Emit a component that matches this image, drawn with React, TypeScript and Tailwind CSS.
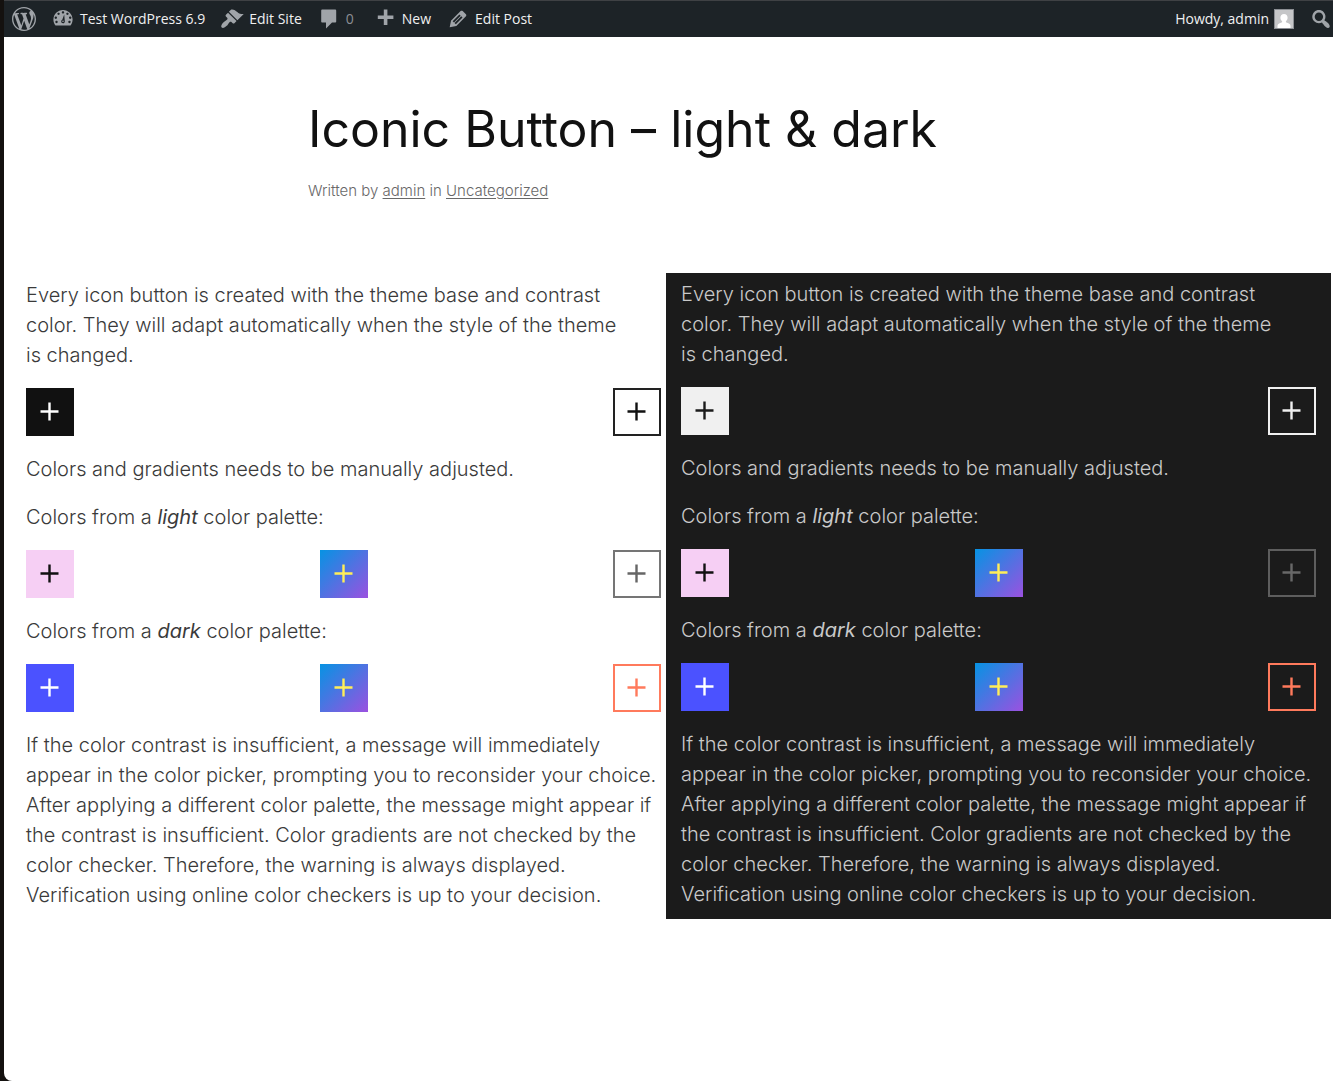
import React from 'react';

const icons = {
  wordpress:
    'M20 10c0-5.51-4.49-10-10-10C4.48 0 0 4.49 0 10c0 5.52 4.48 10 10 10 5.51 0 10-4.48 10-10zM7.78 15.37L4.37 6.22c.55-.02 1.17-.08 1.17-.08.5-.06.44-1.13-.06-1.11 0 0-1.45.11-2.37.11-.18 0-.37 0-.58-.01C4.12 2.69 6.87 1.11 10 1.11c2.33 0 4.45.87 6.05 2.34-.68-.11-1.65.39-1.65 1.58 0 .74.45 1.36.9 2.1.35.61.55 1.36.55 2.46 0 1.49-1.4 5-1.4 5l-3.03-8.37c.54-.02.82-.17.82-.17.5-.05.44-1.25-.06-1.22 0 0-1.44.12-2.38.12-.87 0-2.33-.12-2.33-.12-.5-.03-.56 1.2-.06 1.22l.92.08 1.26 3.41zM17.41 10c.24-.64.74-1.87.43-4.25.7 1.29 1.05 2.71 1.05 4.25 0 3.29-1.73 6.24-4.4 7.78.97-2.59 1.94-5.2 2.92-7.78zM6.1 18.09C3.12 16.65 1.11 13.53 1.11 10c0-1.3.23-2.48.72-3.59C3.25 10.3 4.67 14.2 6.1 18.09zm4.03-6.63l2.58 6.98c-.86.29-1.76.45-2.71.45-.79 0-1.57-.11-2.29-.33.81-2.38 1.62-4.74 2.42-7.1z',
  dashboard:
    'M3.76 15.500h12.48C17.340 14.130 18 12.390 18 10.500c0-4.420-3.580-8-8-8s-8 3.580-8 8c0 1.890.66 3.630 1.760 5zM10 3.500c.55 0 1 .45 1 1s-.45 1-1 1-1-.45-1-1 .45-1 1-1zM6.300 4.700c.55 0 1 .45 1 1s-.45 1-1 1-1-.45-1-1 .45-1 1-1zM13.700 4.700c.55 0 1 .45 1 1s-.45 1-1 1-1-.45-1-1 .45-1 1-1zM4 8c.55 0 1 .45 1 1s-.45 1-1 1-1-.45-1-1 .45-1 1-1zM16 8c.55 0 1 .45 1 1s-.45 1-1 1-1-.45-1-1 .45-1 1-1zM4.600 11.500c.55 0 1 .45 1 1s-.45 1-1 1-1-.45-1-1 .45-1 1-1zM15.400 11.500c.55 0 1 .45 1 1s-.45 1-1 1-1-.45-1-1 .45-1 1-1zM11 6.300l.5 5.600c.1 1-.6 1.700-1.500 1.700s-1.600-.8-1.500-1.700c.1-.6.4-1 .9-1.200zM10 11.200c.4 0 .7.3.7.7s-.3.7-.7.7-.7-.3-.7-.7.3-.7.7-.7z',
  brush:
    'M14.48 11.06L7.41 3.99l1.5-1.5c.5-.56 2.3-.47 3.51.32 1.21.8 1.43 1.28 2.91 2.1 1.18.64 2.45 1.26 4.45.85zm-.71.71L6.7 4.7 4.93 6.47c-.39.39-.39 1.02 0 1.41l1.06 1.06c.39.39.39 1.03 0 1.42-.6.6-1.43 1.11-2.21 1.69-.35.26-.7.53-1.01.84C1.43 14.23.4 16.08 1.4 17.07c.99 1 2.84-.03 4.18-1.36.31-.31.58-.66.85-1.02.57-.78 1.08-1.61 1.69-2.21.39-.39 1.02-.39 1.41 0l1.06 1.06c.39.39 1.02.39 1.41 0z',
  comment: 'M4.500 2h10.500c.6 0 1 .4 1 1v9c0 .6-.4 1-1 1h-2.500l-5 5v-5H4.500c-.6 0-1-.4-1-1V3c0-.6.4-1 1-1z',
  plus: 'M17 7v3h-5v5H9v-5H4V7h5V2h3v5h5z',
  edit: 'M13.89 3.39l2.71 2.72c.46.46.42 1.24.03 1.64l-8.01 8.02-5.56 1.16 1.16-5.58s7.6-7.63 7.99-8.03c.39-.39 1.22-.39 1.68.07zm-2.73 2.79l-5.59 5.61 1.11 1.11 5.54-5.65zm-2.97 8.23l5.58-5.6-1.07-1.08-5.59 5.6z',
  search:
    'M12.14 4.18c1.87 1.87 2.11 4.75.72 6.89.12.1.22.21.36.31.2.16.47.36.81.59.34.24.56.39.66.47.42.31.73.57.94.78.32.32.6.65.84 1 .25.35.44.69.59 1.04.14.35.21.68.18 1-.02.32-.14.59-.36.81s-.49.34-.81.36c-.31.02-.65-.04-.99-.19-.35-.14-.7-.34-1.04-.59-.35-.24-.68-.52-1-.84-.21-.21-.47-.52-.77-.93-.1-.13-.25-.35-.47-.66-.22-.32-.4-.57-.56-.78-.16-.2-.29-.35-.44-.5-2.07 1.09-4.69.76-6.44-.98-2.14-2.15-2.14-5.64 0-7.78 2.15-2.15 5.63-2.15 7.78 0zm-1.41 6.36c1.36-1.37 1.36-3.58 0-4.95-1.37-1.37-3.59-1.37-4.95 0-1.37 1.37-1.37 3.58 0 4.95 1.36 1.37 3.58 1.37 4.95 0z',
};

function BarIcon({ name }: { name: keyof typeof icons }) {
  return (
    <svg viewBox="0 0 20 20" className="w-6 h-6 shrink-0 fill-[#a0a4a9]" fillRule="evenodd" aria-hidden="true">
      <path d={icons[name]} />
    </svg>
  );
}

function AdminBar() {
  return (
    <nav className="flex justify-between items-center pl-2 h-[37px] bg-[#1d2327] border-t border-[#3f4144] text-sm text-[#f0f0f1] font-['Open_Sans','Noto_Sans',sans-serif] whitespace-nowrap">
      <div className="flex items-center gap-[15px]">
        <a href="#about" aria-label="About WordPress">
          <BarIcon name="wordpress" />
        </a>
        <a href="#site" className="flex items-center gap-[5px]">
          <BarIcon name="dashboard" />
          Test WordPress 6.9
        </a>
        <a href="#edit-site" className="flex items-center gap-[5px]">
          <BarIcon name="brush" />
          Edit Site
        </a>
        <a href="#comments" className="flex items-center gap-[5px] pr-1 text-[#8c8f94]">
          <BarIcon name="comment" />0
        </a>
        <a href="#new" className="flex items-center gap-[5px]">
          <BarIcon name="plus" />
          New
        </a>
        <a href="#edit-post" className="flex items-center gap-[5px]">
          <BarIcon name="edit" />
          Edit Post
        </a>
      </div>

      <div className="flex items-center gap-[15px]">
        <a href="#profile" className="flex items-center gap-[5px]">
          Howdy, admin
          <svg viewBox="0 0 20 20" className="w-5 h-5" aria-hidden="true">
            <rect width="20" height="20" fill="#8c8f94" />
            <rect x="1" y="1" width="18" height="18" fill="#c5c6c8" />
            <path d="M10 5c2.200 0 3.600 1.600 3.600 3.700 0 1.500-.7 2.800-1.700 3.500v1l3 1.300c1 .5 1.600 1.300 1.600 2.500V19h-13v-2c0-1.200.6-2 1.600-2.500l3-1.300v-1c-1-.7-1.700-2-1.700-3.500C6.400 6.600 7.800 5 10 5z" fill="#fff" />
          </svg>
        </a>
        <button aria-label="Search">
          <BarIcon name="search" />
        </button>
      </div>
    </nav>
  );
}

function IconButton({ className }: { className: string }) {
  return (
    <button aria-label="Add" className={`flex justify-center items-center w-12 h-12 ${className}`}>
      <svg viewBox="0 0 20 20" className="w-5 h-5" stroke="currentColor" strokeWidth="2.4" aria-hidden="true">
        <path d="M9.500 .5v18M.5 9.500h18" />
      </svg>
    </button>
  );
}

type Tone = {
  column: string;
  fill: string;
  outline: string;
  muted: string;
};

const light: Tone = {
  column: 'pt-[7px] text-[#3a3a3a]',
  fill: 'bg-[#111111] text-white',
  outline: 'border-2 border-[#222222] text-[#111111]',
  muted: 'border-2 border-[#757575] text-[#666666]',
};

const dark: Tone = {
  column: 'px-[15px] pt-[6px] pb-[10px] bg-[#1b1b1b] text-[#c9c9c9]',
  fill: 'bg-[#f0f0f0] text-[#1b1b1b]',
  outline: 'border-2 border-[#f0f0f0] text-[#f0f0f0]',
  muted: 'border-2 border-[#5e5e5e] text-[#686868]',
};

const gradient = 'bg-[linear-gradient(135deg,#0693e3,#9b51e0)] text-[#ffee58]';

function Column({ tone }: { tone: Tone }) {
  return (
    <section className={`flex flex-col flex-1 gap-[18px] text-[20px] leading-[30px] font-light ${tone.column}`}>
      <p>
        Every icon button is created with the theme base and contrast
        <br />
        color. They will adapt automatically when the style of the theme
        <br />
        is changed.
      </p>
      <div className="flex justify-between">
        <IconButton className={tone.fill} />
        <IconButton className={tone.outline} />
      </div>
      <p>Colors and gradients needs to be manually adjusted.</p>
      <p>
        Colors from a <em className="font-normal">light</em> color palette:
      </p>
      <div className="flex justify-between">
        <IconButton className="bg-[#f6cff4] text-[#111111]" />
        <IconButton className={gradient} />
        <IconButton className={tone.muted} />
      </div>
      <p>
        Colors from a <em className="font-normal">dark</em> color palette:
      </p>
      <div className="flex justify-between">
        <IconButton className="bg-[#4b52ff] text-white" />
        <IconButton className={gradient} />
        <IconButton className="border-2 border-[#ff7a5c] text-[#ff7a5c]" />
      </div>
      <p>
        If the color contrast is insufficient, a message will immediately
        <br />
        appear in the color picker, prompting you to reconsider your choice.
        <br />
        After applying a different color palette, the message might appear if
        <br />
        the contrast is insufficient. Color gradients are not checked by the
        <br />
        color checker. Therefore, the warning is always displayed.
        <br />
        Verification using online color checkers is up to your decision.
      </p>
    </section>
  );
}

export default function App() {
  return (
    <div className="min-h-screen pl-1 bg-[#14110f] flex flex-col font-['Inter',sans-serif]">
      <AdminBar />
      <main className="grow bg-white rounded-bl-lg">
        <header className="w-full max-w-[721px] mx-auto pt-[60px] pb-[70px]">
          <h1 className="text-[50px] leading-[64px] font-normal text-[#111111]">Iconic Button – light &amp; dark</h1>
          <p className="mt-[18px] text-[15px] leading-6 font-light text-[#686868]">
            Written by{' '}
            <a href="#author" className="underline underline-offset-2">
              admin
            </a>{' '}
            in{' '}
            <a href="#category" className="underline underline-offset-2">
              Uncategorized
            </a>
          </p>
        </header>

        <div className="flex gap-[5px] pl-[22px] pr-[2px]">
          <Column tone={light} />
          <Column tone={dark} />
        </div>
      </main>
    </div>
  );
}
